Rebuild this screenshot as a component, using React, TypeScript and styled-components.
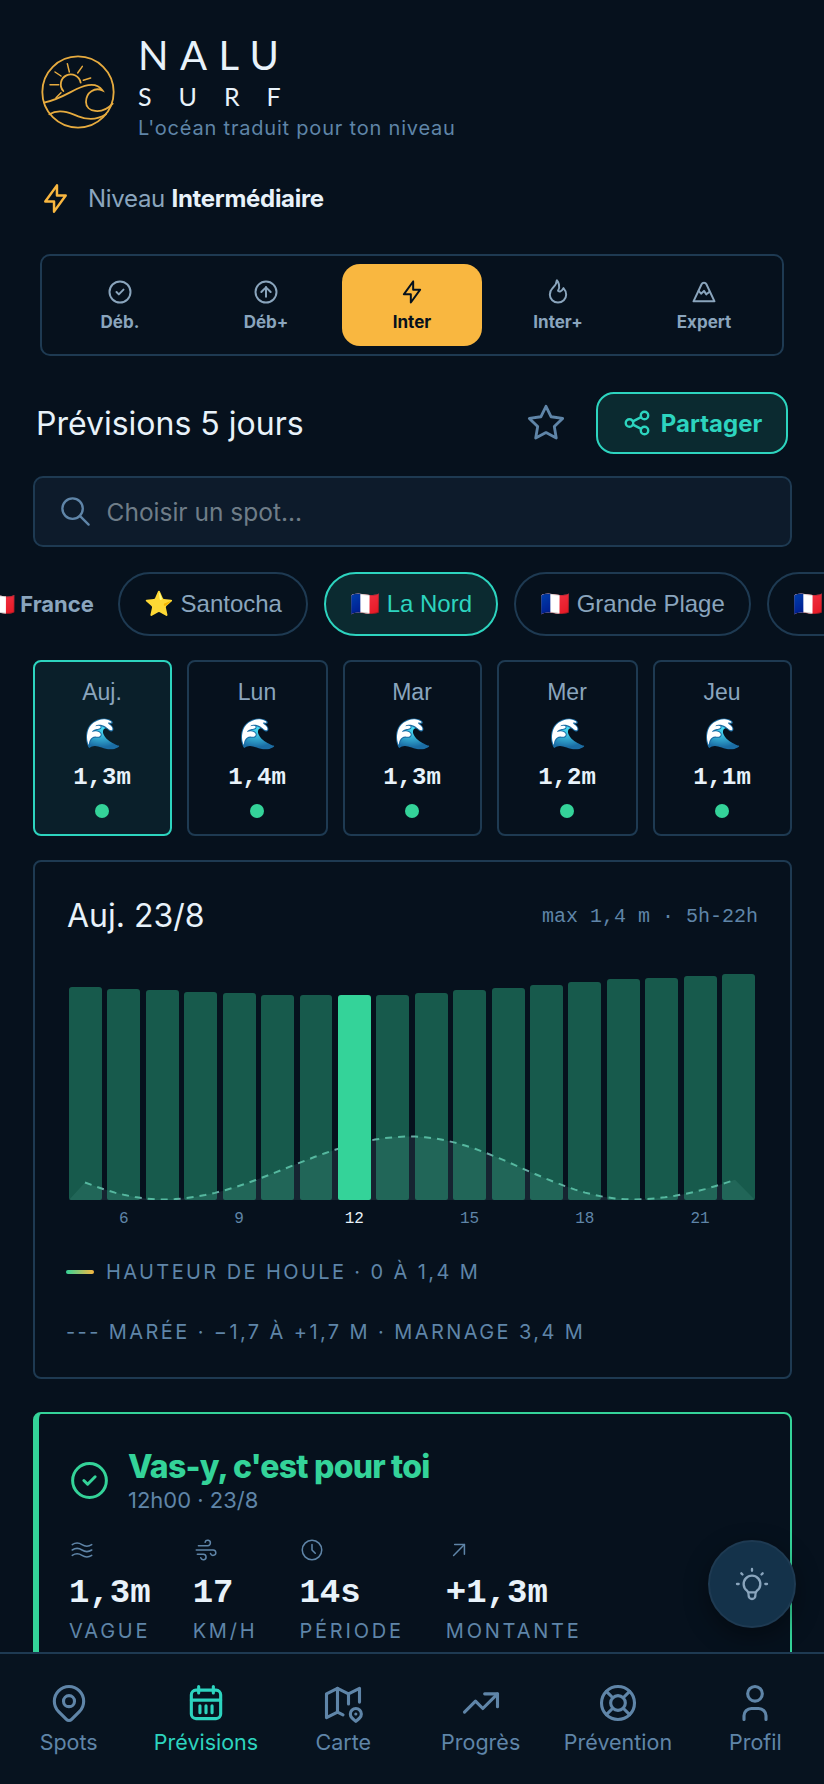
import React from "react";
import styled, { createGlobalStyle } from "styled-components";
import {
  TbArrowUpRight,
  TbBolt,
  TbBulb,
  TbCircleArrowUp,
  TbCircleCheck,
  TbClock,
  TbFlame,
  TbLifebuoy,
  TbMap2,
  TbMapPin,
  TbMountain,
  TbRipple,
  TbSearch,
  TbShare,
  TbStar,
  TbTrendingUp,
  TbUser,
  TbWind,
} from "react-icons/tb";

const colors = {
  bg: "#06111d",
  panel: "#0d1b2b",
  border: "#1e3a52",
  text: "#e8f2fa",
  muted: "#5f85a8",
  soft: "#8aa5bd",
  green: "#34d399",
  teal: "#2dd4bf",
  amber: "#f9b740",
};

const sans = `Inter, "Noto Sans", sans-serif`;
const arial = `"Liberation Sans", Arial, sans-serif`;
const mono = `"Liberation Mono", monospace`;

const levels = [
  { label: "Déb.", Icon: TbCircleCheck },
  { label: "Déb+", Icon: TbCircleArrowUp },
  { label: "Inter", Icon: TbBolt, active: true },
  { label: "Inter+", Icon: TbFlame },
  { label: "Expert", Icon: TbMountain },
];

const days = [
  { name: "Auj.", height: "1,3m", active: true },
  { name: "Lun", height: "1,4m" },
  { name: "Mar", height: "1,3m" },
  { name: "Mer", height: "1,2m" },
  { name: "Jeu", height: "1,1m" },
];

const barHeights = [213, 211, 210, 208, 207, 205, 205, 205, 205, 207, 210, 212, 215, 218, 221, 222, 224, 226];

const stats = [
  { label: "VAGUE", value: "1,3m", Icon: TbRipple },
  { label: "KM/H", value: "17", Icon: TbWind },
  { label: "PÉRIODE", value: "14s", Icon: TbClock },
  { label: "MONTANTE", value: "+1,3m", Icon: TbArrowUpRight },
];

// tide is not quite symmetric: low at 94 and 564, high at 341, each stretch has its own half period
function tideY(x: number) {
  if (x < 94) return 168 + 31.5 * Math.cos((Math.PI * (94 - x)) / 224);
  if (x < 341) return 168 - 31.5 * Math.cos((Math.PI * (341 - x)) / 247);
  if (x < 564) return 168 - 31.5 * Math.cos((Math.PI * (x - 341)) / 223);
  return 168 + 31.5 * Math.cos((Math.PI * (x - 564)) / 270);
}

const tidePoints = Array.from({ length: 66 }, (_, i) => {
  const x = 16 + i * 10;
  return `${x} ${tideY(x).toFixed(1)}`;
}).join("L");

function Logo() {
  return (
    <svg width="74" height="74" viewBox="33 44 222 222" fill="none" stroke="#e6ab3f" strokeWidth="5.500" strokeLinecap="round">
      <circle cx="144" cy="155" r="107" />
      <path d="M100 152A30 30 0 1 1 152 127" />
      <path d="M75 95L93 107M112 70L118 95M157 78L143 98M182 113L160 120M60 133L86 133M78 172L93 157" strokeWidth="4.500" />
      <path d="M42 187C85 178 115 158 140 146C165 134 200 125 217 150C195 140 168 155 168 185C168 215 215 225 248 190" />
      <path d="M58 222C85 205 115 215 145 228C175 240 200 240 228 222" />
    </svg>
  );
}

function CalendarIcon() {
  return (
    <svg width="44" height="44" viewBox="0 0 24 24" fill="none" stroke="currentColor" strokeWidth="1.700" strokeLinecap="round" strokeLinejoin="round">
      <rect x="4" y="5" width="16" height="15.500" rx="2.500" />
      <path d="M8 3v3.500M16 3v3.500M4 10.400h16M8.700 13.500v3.800M12 13.500v3.800M15.300 13.500v3.800" />
    </svg>
  );
}

function TideCurve() {
  return (
    <TideSvg viewBox="0 0 686 200" aria-hidden="true">
      <path d={`M0 200L${tidePoints}L686 200Z`} fill="#8fb7c9" fillOpacity="0.12" />
      <path d={`M${tidePoints}`} fill="none" stroke="#6aa8a4" strokeWidth="2" strokeDasharray="7 6" />
    </TideSvg>
  );
}

export default function App() {
  return (
    <>
      <GlobalStyle />
      <Page>
        <Header>
          <LogoSlot>
            <Logo />
          </LogoSlot>
          <Brand>
            <BrandName>NALU</BrandName>
            <BrandSub>SURF</BrandSub>
            <Tagline>L'océan traduit pour ton niveau</Tagline>
          </Brand>
        </Header>

        <LevelRow>
          <TbBolt size={35} color={colors.amber} strokeWidth={1.7} />
          <LevelText>
            Niveau <strong>Intermédiaire</strong>
          </LevelText>
        </LevelRow>

        <LevelTabs>
          {levels.map(({ label, Icon, active }) => (
            <LevelTab key={label} $active={active}>
              <Icon size={28} strokeWidth={1.7} />
              <span>{label}</span>
            </LevelTab>
          ))}
        </LevelTabs>

        <TitleRow>
          <PageTitle>Prévisions 5 jours</PageTitle>
          <FavButton>
            <TbStar size={40} strokeWidth={1.7} />
          </FavButton>
          <ShareButton>
            <TbShare size={30} strokeWidth={1.9} />
            Partager
          </ShareButton>
        </TitleRow>

        <SearchBox>
          <TbSearch size={35} strokeWidth={1.6} color={colors.muted} />
          <SearchPlaceholder>Choisir un spot...</SearchPlaceholder>
        </SearchBox>

        <PillRow>
          <RegionLabel>🇫🇷 France</RegionLabel>
          <Pill>⭐ Santocha</Pill>
          <Pill $active>🇫🇷 La Nord</Pill>
          <Pill>🇫🇷 Grande Plage</Pill>
          <Pill>🇫🇷 Côte des Basques</Pill>
        </PillRow>

        <DayGrid>
          {days.map((day) => (
            <DayCard key={day.name} $active={day.active}>
              <DayName>{day.name}</DayName>
              <DayWave>🌊</DayWave>
              <DayHeight>{day.height}</DayHeight>
              <DayDot />
            </DayCard>
          ))}
        </DayGrid>

        <ChartCard>
          <ChartHead>
            <ChartTitle>Auj. 23/8</ChartTitle>
            <ChartMeta>max 1,4 m · 5h-22h</ChartMeta>
          </ChartHead>
          <Chart>
            <TideCurve />
            {barHeights.map((h, i) => (
              <BarSlot key={i}>
                <Bar $active={i === 7} style={{ height: h }} />
              </BarSlot>
            ))}
          </Chart>
          <Axis>
            {barHeights.map((_, i) => {
              const hour = i + 5;
              return (
                <AxisLabel key={hour} $active={hour === 12}>
                  {hour % 3 === 0 ? hour : ""}
                </AxisLabel>
              );
            })}
          </Axis>
          <Legend>
            <LegendSwatch />
            HAUTEUR DE HOULE · 0 À 1,4 M
          </Legend>
          <Legend>--- MARÉE · −1,7 À +1,7 M · MARNAGE 3,4 M</Legend>
        </ChartCard>

        <VerdictCard>
          <VerdictHead>
            <TbCircleCheck size={45} color={colors.green} strokeWidth={1.6} />
            <div>
              <VerdictTitle>Vas-y, c'est pour toi</VerdictTitle>
              <VerdictSub>12h00 · 23/8</VerdictSub>
            </div>
          </VerdictHead>
          <Stats>
            {stats.map(({ label, value, Icon }) => (
              <Stat key={label}>
                <Icon size={26} strokeWidth={1.4} color={colors.muted} />
                <StatValue>{value}</StatValue>
                <StatLabel>{label}</StatLabel>
              </Stat>
            ))}
          </Stats>
        </VerdictCard>
      </Page>

      <TipButton>
        <TbBulb size={40} strokeWidth={1.4} />
      </TipButton>

      <BottomNav>
        <NavItem>
          <TbMapPin size={44} strokeWidth={1.7} />
          <NavLabel>Spots</NavLabel>
        </NavItem>
        <NavItem $active>
          <CalendarIcon />
          <NavLabel>Prévisions</NavLabel>
        </NavItem>
        <NavItem>
          <TbMap2 size={44} strokeWidth={1.7} />
          <NavLabel>Carte</NavLabel>
        </NavItem>
        <NavItem>
          <TbTrendingUp size={44} strokeWidth={1.7} />
          <NavLabel>Progrès</NavLabel>
        </NavItem>
        <NavItem>
          <TbLifebuoy size={44} strokeWidth={1.7} />
          <NavLabel>Prévention</NavLabel>
        </NavItem>
        <NavItem>
          <TbUser size={44} strokeWidth={1.7} />
          <NavLabel>Profil</NavLabel>
        </NavItem>
      </BottomNav>
    </>
  );
}

const GlobalStyle = createGlobalStyle`
  html, body {
    margin: 0;
    height: 100%;
    overflow: hidden;
    background: ${colors.bg};
    color: ${colors.text};
    font-family: ${sans};
  }
  * { box-sizing: border-box; }
`;

const Page = styled.main`
  height: 1784px;
  overflow: hidden;
  padding: 32px 32.500px 0;
`;

const Header = styled.header`
  display: flex;
  align-items: center;
  gap: 23px;
  padding-left: 8.500px;
`;

const LogoSlot = styled.div`
  display: flex;
  margin-top: 12px;
`;

const Brand = styled.div`
  display: flex;
  flex-direction: column;
`;

const BrandName = styled.div`
  font-family: Lato, ${sans};
  font-size: 40px;
  line-height: 46px;
  letter-spacing: 11.500px;
`;

const BrandSub = styled.div`
  font-family: Lato, ${sans};
  font-size: 25px;
  line-height: 30px;
  margin-top: 3px;
  letter-spacing: 27px;
`;

const Tagline = styled.div`
  font-size: 20px;
  line-height: 24px;
  margin-top: 5px;
  letter-spacing: 0.800px;
  color: ${colors.muted};
`;

const LevelRow = styled.div`
  display: flex;
  align-items: center;
  gap: 15px;
  margin: 41px 0 0 5.500px;
`;

const LevelText = styled.div`
  font-size: 24px;
  line-height: 32px;
  letter-spacing: -0.300px;
  color: ${colors.soft};
  strong {
    color: ${colors.text};
    font-weight: 700;
  }
`;

const LevelTabs = styled.div`
  display: flex;
  justify-content: space-between;
  height: 102px;
  margin: 38px 7.500px 0;
  padding: 8px;
  border: 2px solid ${colors.border};
  border-radius: 10px;
`;

const LevelTab = styled.div<{ $active?: boolean }>`
  width: 140px;
  display: flex;
  flex-direction: column;
  align-items: center;
  justify-content: center;
  gap: 6px;
  border-radius: 18px;
  background: ${({ $active }) => ($active ? colors.amber : "transparent")};
  color: ${({ $active }) => ($active ? colors.bg : colors.soft)};
  font-size: 17px;
  font-weight: 700;
`;

const TitleRow = styled.div`
  display: flex;
  align-items: center;
  margin: 36px 3.500px 0;
`;

const PageTitle = styled.h1`
  flex: 1;
  margin: 0;
  font-size: 32px;
  font-weight: 400;
`;

const FavButton = styled.div`
  display: flex;
  color: ${colors.muted};
  margin-right: 30px;
`;

const ShareButton = styled.div`
  display: flex;
  align-items: center;
  gap: 9px;
  width: 192px;
  height: 62px;
  justify-content: center;
  border: 2px solid ${colors.teal};
  border-radius: 18px;
  background: #0b2a30;
  color: ${colors.teal};
  font-size: 24px;
  font-weight: 700;
`;

const SearchBox = styled.div`
  display: flex;
  align-items: center;
  gap: 14px;
  height: 71px;
  margin-top: 22px;
  padding: 0 23px;
  background: ${colors.panel};
  border: 2px solid ${colors.border};
  border-radius: 10px;
`;

const SearchPlaceholder = styled.span`
  font-size: 24.500px;
  color: #6f7d88;
`;

const PillRow = styled.div`
  display: flex;
  align-items: center;
  gap: 16px;
  margin: 25px -32.500px 0 -44.500px;
  overflow: hidden;
`;

const RegionLabel = styled.span`
  flex: none;
  font-size: 22px;
  font-weight: 700;
  color: ${colors.soft};
  margin-right: 8px;
`;

const Pill = styled.span<{ $active?: boolean }>`
  flex: none;
  height: 64px;
  display: flex;
  align-items: center;
  padding: 0 24px;
  border: 2px solid ${({ $active }) => ($active ? colors.teal : colors.border)};
  border-radius: 32px;
  background: ${({ $active }) => ($active ? "#0b2a30" : "transparent")};
  color: ${({ $active }) => ($active ? colors.teal : colors.soft)};
  font-family: ${arial};
  font-size: 24px;
`;

const DayGrid = styled.div`
  display: grid;
  grid-template-columns: 139px 141px 139px 141px 139px;
  gap: 15px;
  margin-top: 24px;
`;

const DayCard = styled.div<{ $active?: boolean }>`
  height: 176px;
  display: flex;
  flex-direction: column;
  align-items: center;
  padding-top: 16px;
  border: 2px solid ${({ $active }) => ($active ? colors.teal : colors.border)};
  border-radius: 8px;
  background: ${({ $active }) => ($active ? "#0a1f2a" : "transparent")};
  font-family: ${arial};
`;

const DayName = styled.div`
  font-size: 23px;
  line-height: 28px;
  color: ${colors.soft};
`;

const DayWave = styled.div`
  font-size: 30px;
  line-height: 38px;
  margin-top: 9px;
`;

const DayHeight = styled.div`
  font-family: ${mono};
  font-size: 24px;
  font-weight: 700;
  line-height: 28px;
  margin-top: 11px;
`;

const DayDot = styled.span`
  width: 14px;
  height: 14px;
  margin-top: 12px;
  border-radius: 50%;
  background: ${colors.green};
`;

const ChartCard = styled.section`
  height: 519px;
  margin-top: 24px;
  padding: 32px 34.500px 0;
  border: 2px solid ${colors.border};
  border-radius: 8px;
`;

const ChartHead = styled.div`
  display: flex;
  align-items: center;
  justify-content: space-between;
  margin: 0 -3px 0 -2px;
`;

const ChartTitle = styled.h2`
  margin: 0;
  font-size: 32px;
  font-weight: 400;
  line-height: 44px;
`;

const ChartMeta = styled.span`
  font-family: ${mono};
  font-size: 20px;
  color: ${colors.muted};
`;

const Chart = styled.div`
  position: relative;
  display: grid;
  grid-template-columns: repeat(18, 1fr);
  column-gap: 5.500px;
  align-items: end;
  height: 226px;
  margin-top: 36px;
`;

const TideSvg = styled.svg`
  position: absolute;
  left: 0;
  bottom: 0;
  width: 100%;
  height: 200px;
`;

const BarSlot = styled.div`
  position: relative;
  display: flex;
  align-items: flex-end;
`;

const Bar = styled.div<{ $active?: boolean }>`
  width: 100%;
  border-radius: 3px 3px 2px 2px;
  background: ${({ $active }) => ($active ? colors.green : "rgba(52, 211, 153, 0.38)")};
`;

const Axis = styled.div`
  display: grid;
  grid-template-columns: repeat(18, 1fr);
  column-gap: 5.500px;
  margin-top: 9px;
`;

const AxisLabel = styled.span<{ $active?: boolean }>`
  height: 20px;
  font-family: ${mono};
  font-size: 16px;
  line-height: 20px;
  text-align: center;
  color: ${({ $active }) => ($active ? colors.text : colors.muted)};
`;

const Legend = styled.div`
  display: flex;
  align-items: center;
  gap: 12px;
  margin: 29px 0 0 -3px;
  height: 28px;
  font-size: 20px;
  letter-spacing: 2.400px;
  color: ${colors.muted};
  & + & {
    margin-top: 32px;
  }
`;

const LegendSwatch = styled.span`
  width: 28px;
  height: 4px;
  border-radius: 2px;
  background: linear-gradient(90deg, ${colors.green}, ${colors.amber});
`;

const VerdictCard = styled.section`
  margin-top: 33px;
  height: 300px;
  padding: 35px 30.500px;
  border: 2px solid ${colors.green};
  border-left-width: 6px;
  border-radius: 8px;
`;

const VerdictHead = styled.div`
  display: flex;
  align-items: center;
  gap: 16px;
  margin-left: -2px;
`;

const VerdictTitle = styled.div`
  font-size: 32px;
  font-weight: 800;
  line-height: 36px;
  letter-spacing: -0.780px;
  color: ${colors.green};
`;

const VerdictSub = styled.div`
  font-size: 22px;
  line-height: 24px;
  margin-top: 3px;
  color: ${colors.muted};
`;

const Stats = styled.div`
  display: flex;
  gap: 42px;
  margin-top: 25px;
`;

const Stat = styled.div`
  display: flex;
  flex-direction: column;
  align-items: flex-start;
`;

const StatValue = styled.div`
  font-family: ${mono};
  font-size: 34px;
  font-weight: 700;
  line-height: 40px;
  margin-top: 10px;
`;

const StatLabel = styled.div`
  font-size: 20px;
  line-height: 28px;
  margin-top: 4px;
  letter-spacing: 2.800px;
  color: ${colors.muted};
`;

const TipButton = styled.div`
  position: fixed;
  left: 708px;
  top: 1540px;
  width: 88px;
  height: 88px;
  display: flex;
  align-items: center;
  justify-content: center;
  border-radius: 50%;
  background: #14324a;
  border: 2px solid #1e3a52;
  color: ${colors.soft};
  box-shadow: 0 8px 24px rgba(0, 0, 0, 0.4);
`;

const BottomNav = styled.nav`
  position: fixed;
  left: 0;
  right: 0;
  bottom: 0;
  height: 132px;
  display: grid;
  grid-template-columns: repeat(6, 1fr);
  padding-top: 27px;
  background: #07131f;
  border-top: 2px solid ${colors.border};
`;

const NavItem = styled.div<{ $active?: boolean }>`
  display: flex;
  flex-direction: column;
  align-items: center;
  color: ${({ $active }) => ($active ? colors.teal : colors.muted)};
`;

const NavLabel = styled.span`
  margin-top: 4px;
  font-size: 21.500px;
  line-height: 26px;
`;
